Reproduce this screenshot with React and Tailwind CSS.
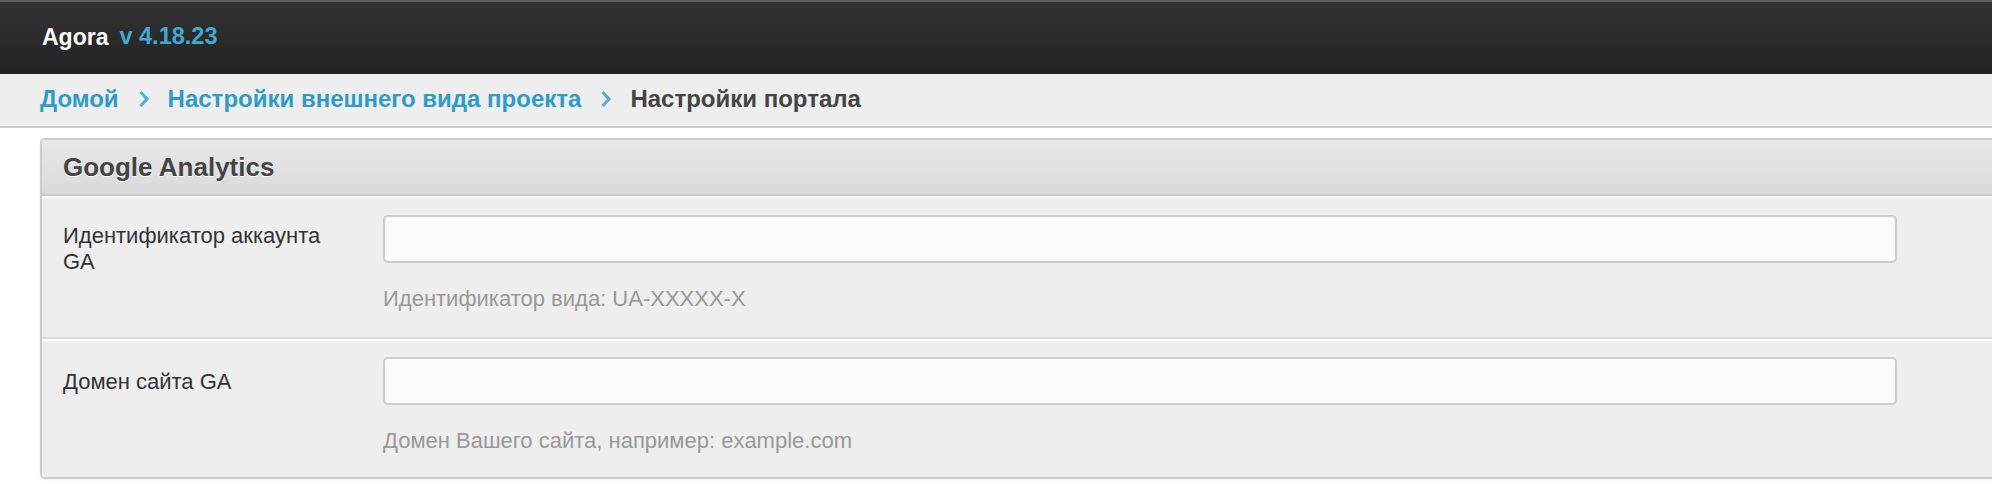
import React from 'react';

function Chevron() {
    return (
        <svg width="10" height="18" viewBox="0 0 10 18" className="ml-[20px] mr-[19px]">
            <path d="M1.5 2 L8 9 L1.5 16" fill="none" stroke="#5aaed6" strokeWidth="3.2" />
        </svg>
    );
}

function FieldRow({ label, hint, last, labelTop, rowTop }) {
    return (
        <div className={`flex bg-[#eeeeee] pl-[21px] ${rowTop} ${last ? 'pb-[23px]' : 'pb-[25px] border-b-2 border-[#dcdcdc] shadow-[0_2px_0_#fafafa] mb-[2px]'}`}>
            <div className={`w-[320px] shrink-0 ${labelTop} text-[22px] leading-[26px] text-[#333] pr-[44px]`}>{label}</div>
            <div className="flex flex-col">
                <input
                    type="text"
                    className="w-[1514px] h-[48px] rounded-[5px] border-2 border-[#cccccc] bg-[#fcfcfc] outline-none"
                />
                <div className="mt-[23px] text-[22px] leading-[26px] text-[#999999]">{hint}</div>
            </div>
        </div>
    );
}

export default function App() {
    return (
        <div className="w-[1992px] h-[484px] overflow-hidden bg-white font-['Liberation_Sans',Arial,sans-serif]">
            {/* top bar */}
            <div className="h-[74px] border-t-2 border-[#5c5c60] bg-gradient-to-b from-[#333333] to-[#222222] flex items-center pl-[42px] pb-[2px]">
                <span className="text-white font-bold text-[23px]">Agora</span>
                <span className="ml-[11px] text-[#3fa9d4] font-bold text-[23.5px]">v 4.18.23</span>
            </div>

            {/* breadcrumbs */}
            <div className="h-[54px] bg-[#eeeeee] border-b-2 border-[#cccccc] flex items-center pl-[40px] pb-[2px] text-[24px] font-bold">
                <a className="text-[#2f9bc6]">Домой</a>
                <Chevron />
                <a className="text-[#2f9bc6]">Настройки внешнего вида проекта</a>
                <Chevron />
                <span className="text-[#444444]">Настройки портала</span>
            </div>

            {/* panel */}
            <div className="mt-[10px] ml-[40px] w-[2000px] border-2 border-[#cccccc] rounded-[5px] overflow-hidden shadow-[0_1px_2px_rgba(0,0,0,0.08)]">
                <div className="h-[56px] bg-gradient-to-b from-[#e8e8e8] to-[#dadada] border-b-2 border-[#cccccc] flex items-center pl-[21px]">
                    <span className="text-[26px] font-bold text-[#444444] [text-shadow:0_1px_0_#ffffff]">Google Analytics</span>
                </div>
                <div className="h-[2px] bg-[#fafafa]" />
                <FieldRow
                    label="Идентификатор аккаунта GA"
                    hint="Идентификатор вида: UA-XXXXX-X"
                    rowTop="pt-[17px]"
                    labelTop="pt-[8px]"
                />
                <FieldRow
                    label="Домен сайта GA"
                    hint="Домен Вашего сайта, например: example.com"
                    rowTop="pt-[16px]"
                    labelTop="pt-[12px]"
                    last
                />
            </div>
        </div>
    );
}
